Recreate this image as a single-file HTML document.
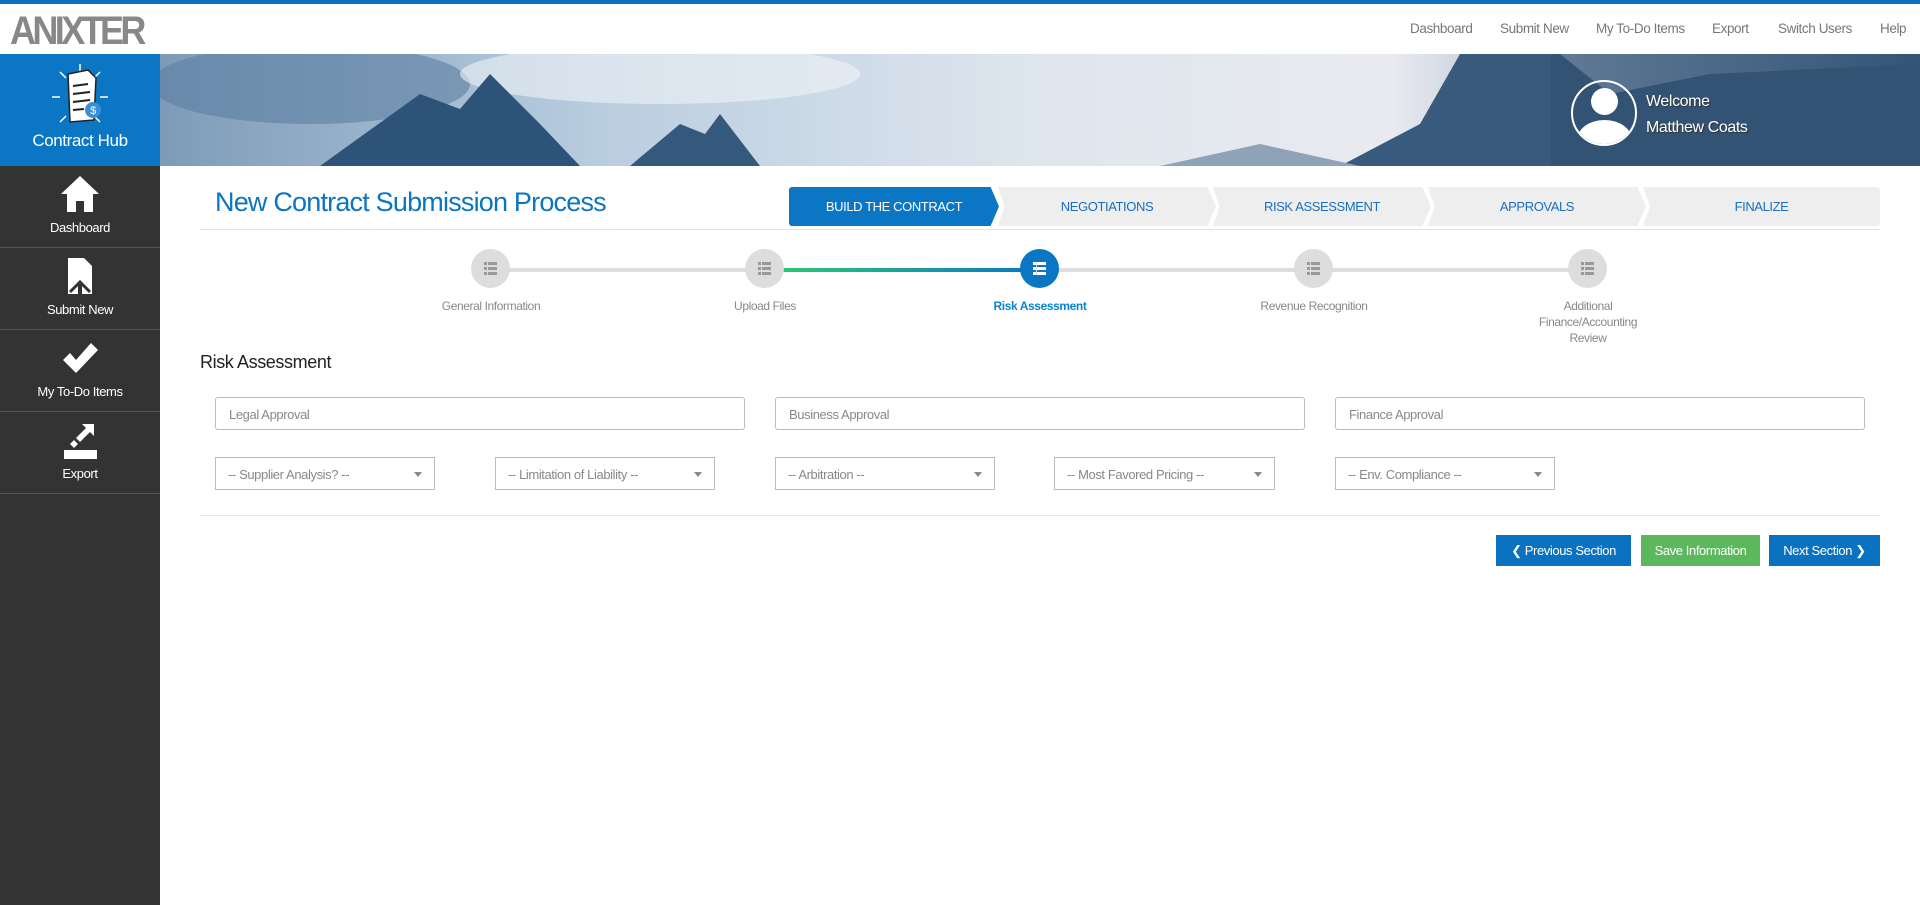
<!DOCTYPE html>
<html><head><meta charset="utf-8"><style>
*{box-sizing:border-box;margin:0;padding:0}
body{width:1920px;height:905px;overflow:hidden;background:#fff;font-family:"Liberation Sans Narrow","Liberation Sans",sans-serif;position:relative;letter-spacing:-0.4px}
.abs{position:absolute}
.nav a{position:absolute;top:21px;font-size:13.5px;color:#777;text-decoration:none}
.side{left:0;top:166px;width:160px;height:739px;background:#333}
.si{position:absolute;left:0;width:160px;height:82px;border-bottom:1px solid #555;color:#fff;text-align:center;font-size:13px}
.si span{position:absolute;left:0;right:0;bottom:12px}
.si svg{position:absolute;left:60px;top:8px}
.tab{position:absolute;top:187px;height:39px;line-height:39px;text-align:center;font-size:13px;color:#1a6fc0;background:#eee}
.step{position:absolute;top:249px;width:39px;height:39px;border-radius:50%;background:#ddd}
.step i{position:absolute;left:13px;top:13px;width:13px;height:13px;background:linear-gradient(#999 0 3px,transparent 3px 5px,#999 5px 8px,transparent 8px 10px,#999 10px 13px)}
.step i:before{content:"";position:absolute;left:3px;top:0;width:1px;height:13px;background:#ddd}
.lbl{position:absolute;top:298px;width:200px;text-align:center;font-size:12px;color:#888;line-height:16px}
.inp{position:absolute;top:397px;height:33px;border:1px solid #bbb;border-radius:3px;font-size:13px;color:#888;padding:9px 13px}
.sel{position:absolute;top:457px;height:33px;border:1px solid #bbb;font-size:13px;color:#888;padding:9px 12px}
.sel:after{content:"";position:absolute;right:12px;top:14px;border:4px solid transparent;border-top:5px solid #888}
.btn{position:absolute;top:535px;height:31px;line-height:31px;color:#fff;font-size:13px;text-align:center}
</style></head><body>
<div class="abs" style="left:0;top:0;width:1920px;height:4px;background:#0a72c0"></div>
<div class="abs" style="left:10px;top:9px;font-family:'Liberation Sans',sans-serif;font-weight:bold;font-size:40px;letter-spacing:-4px;color:#888;transform:scaleX(0.9);transform-origin:left">ANIXTER</div>
<div class="nav"><a style="left:1410px">Dashboard</a><a style="left:1500px">Submit New</a><a style="left:1596px">My To-Do Items</a><a style="left:1712px">Export</a><a style="left:1778px">Switch Users</a><a style="left:1880px">Help</a></div>
<svg class="abs" style="left:160px;top:54px" width="1760" height="112" viewBox="0 0 1760 112" preserveAspectRatio="none">
<defs><linearGradient id="sky" x1="0" x2="1" y1="0" y2="0"><stop offset="0" stop-color="#7d9bb8"/><stop offset="0.25" stop-color="#b9cde0"/><stop offset="0.5" stop-color="#dfe6ee"/><stop offset="0.7" stop-color="#e9eaf0"/><stop offset="0.85" stop-color="#8aa0b8"/><stop offset="1" stop-color="#3f5f80"/></linearGradient></defs>
<rect width="1760" height="112" fill="url(#sky)"/>
<ellipse cx="150" cy="30" rx="160" ry="40" fill="#5c7fa2" opacity=".6"/>
<ellipse cx="500" cy="20" rx="200" ry="30" fill="#f0f3f7" opacity=".6"/>
<polygon points="160,112 260,40 300,55 330,20 380,70 420,112" fill="#2d5478"/>
<polygon points="470,112 520,70 545,80 560,60 600,112" fill="#34597d"/>
<polygon points="1180,112 1260,70 1300,0 1400,0 1450,40 1550,20 1760,10 1760,112" fill="#385a7c"/>
<rect x="1391" y="0" width="369" height="112" fill="#2e4f70" opacity=".6"/>
<polygon points="1000,112 1100,90 1200,112" fill="#8ea3b7"/>
</svg>
<div class="abs" style="left:0;top:54px;width:160px;height:112px;background:#0a76c4;color:#fff;text-align:center">
<svg width="60" height="70" style="margin-top:8px" viewBox="0 0 60 70"><g stroke="#fff" stroke-width="1.5">
<line x1="30" y1="2" x2="30" y2="10"/><line x1="10" y1="10" x2="16" y2="16"/><line x1="50" y1="10" x2="44" y2="16"/><line x1="2" y1="35" x2="10" y2="35"/><line x1="58" y1="35" x2="50" y2="35"/><line x1="10" y1="60" x2="16" y2="54"/><line x1="50" y1="60" x2="44" y2="54"/></g>
<path d="M18 12 L38 8 L46 16 L44 58 L20 60 Z" fill="#fff" stroke="#222" stroke-width="1.5"/>
<g stroke="#222" stroke-width="2"><line x1="23" y1="24" x2="38" y2="22"/><line x1="23" y1="32" x2="40" y2="30"/><line x1="23" y1="40" x2="40" y2="38"/><line x1="23" y1="48" x2="34" y2="47"/></g>
<circle cx="43" cy="48" r="8" fill="#3a8fd8"/><text x="43" y="52" fill="#fff" font-size="11" text-anchor="middle" font-family="Liberation Sans">$</text></svg>
<div style="font-size:17px;margin-top:-6px">Contract Hub</div></div>
<div class="abs" style="left:1571px;top:80px;width:66px;height:66px;border-radius:50%;border:2px solid #fff;overflow:hidden">
<div class="abs" style="left:18px;top:6px;width:27px;height:27px;border-radius:50%;background:#fff"></div>
<div class="abs" style="left:4px;top:38px;width:55px;height:40px;border-radius:50%;background:#fff"></div></div>
<div class="abs" style="left:1646px;top:89px;color:#fff;font-size:16px;line-height:26px;text-shadow:1px 1px 1px #333">Welcome<br>Matthew Coats</div>
<div class="abs side">
<div class="si" style="top:0"><svg width="40" height="40" viewBox="0 0 40 40"><path d="M20 2 L39 20 L33 20 L33 38 L24 38 L24 27 L16 27 L16 38 L7 38 L7 20 L1 20 Z" fill="#fff"/></svg><span>Dashboard</span></div>
<div class="si" style="top:82px"><svg width="40" height="40" viewBox="0 0 40 40"><path d="M8 2 L24 2 L32 10 L32 38 L8 38 Z" fill="#fff"/><path d="M10 36 L20 26 L30 36" fill="none" stroke="#333" stroke-width="3"/><rect x="18" y="28" width="4" height="10" fill="#333"/></svg><span>Submit New</span></div>
<div class="si" style="top:164px"><svg width="40" height="40" viewBox="0 0 40 40"><path d="M3 22 L10 15 L16 22 L31 5 L38 12 L16 35 Z" fill="#fff"/></svg><span>My To-Do Items</span></div>
<div class="si" style="top:246px"><svg width="40" height="40" viewBox="0 0 40 40"><path d="M22 4 L34 4 L34 16 L30 12 L20 22 L16 18 L26 8 Z" fill="#fff"/><path d="M10 24 L14 20 L18 24 L14 28 Z" fill="#fff"/><rect x="4" y="30" width="33" height="9" fill="#fff"/></svg><span>Export</span></div>
</div>
<div class="abs" style="left:215px;top:187px;font-size:27px;letter-spacing:-0.8px;color:#0a76c1">New Contract Submission Process</div>
<div class="abs" style="left:200px;top:229px;width:1680px;height:1px;background:#e5e5e5"></div>
<div class="tab" style="left:789px;width:210px;background:#0a76c4;color:#fff;border-radius:3px 0 0 3px;clip-path:polygon(0 0,96% 0,100% 50%,96% 100%,0 100%)">BUILD THE CONTRACT</div>
<div class="tab" style="left:998px;width:218px;clip-path:polygon(0 0,96% 0,100% 50%,96% 100%,0 100%,3% 50%)">NEGOTIATIONS</div>
<div class="tab" style="left:1213px;width:218px;clip-path:polygon(0 0,96% 0,100% 50%,96% 100%,0 100%,3% 50%)">RISK ASSESSMENT</div>
<div class="tab" style="left:1428px;width:218px;clip-path:polygon(0 0,96% 0,100% 50%,96% 100%,0 100%,3% 50%)">APPROVALS</div>
<div class="tab" style="left:1643px;width:237px;border-radius:0 3px 3px 0;clip-path:polygon(0 0,100% 0,100% 100%,0 100%,3% 50%)">FINALIZE</div>
<div class="abs" style="left:491px;top:268px;width:1097px;height:4px;background:#ddd"></div>
<div class="abs" style="left:765px;top:268px;width:275px;height:4px;background:linear-gradient(90deg,#2ecc71,#0a76c4)"></div>
<div class="step" style="left:471px"><i></i></div>
<div class="step" style="left:745px"><i></i></div>
<div class="step" style="left:1020px;background:#0a76c4"><i style="background:linear-gradient(#fff 0 3px,transparent 3px 5px,#fff 5px 8px,transparent 8px 10px,#fff 10px 13px)"></i></div>
<div class="step" style="left:1294px"><i></i></div>
<div class="step" style="left:1568px"><i></i></div>
<div class="lbl" style="left:391px">General Information</div>
<div class="lbl" style="left:665px">Upload Files</div>
<div class="lbl" style="left:940px;color:#0a84d0;font-weight:bold">Risk Assessment</div>
<div class="lbl" style="left:1214px">Revenue Recognition</div>
<div class="lbl" style="left:1488px">Additional<br>Finance/Accounting<br>Review</div>
<div class="abs" style="left:200px;top:352px;font-size:18px;color:#222">Risk Assessment</div>
<div class="inp" style="left:215px;width:530px">Legal Approval</div>
<div class="inp" style="left:775px;width:530px">Business Approval</div>
<div class="inp" style="left:1335px;width:530px">Finance Approval</div>
<div class="sel" style="left:215px;width:220px">-- Supplier Analysis? --</div>
<div class="sel" style="left:495px;width:220px">-- Limitation of Liability --</div>
<div class="sel" style="left:775px;width:220px">-- Arbitration --</div>
<div class="sel" style="left:1054px;width:221px">-- Most Favored Pricing --</div>
<div class="sel" style="left:1335px;width:220px">-- Env. Compliance --</div>
<div class="abs" style="left:200px;top:515px;width:1680px;height:1px;background:#e8e8e8"></div>
<div class="btn" style="left:1496px;width:135px;background:#0a72c0">&#10094; Previous Section</div>
<div class="btn" style="left:1641px;width:119px;background:#5cb85c">Save Information</div>
<div class="btn" style="left:1769px;width:111px;background:#0a72c0">Next Section &#10095;</div>
</body></html>
